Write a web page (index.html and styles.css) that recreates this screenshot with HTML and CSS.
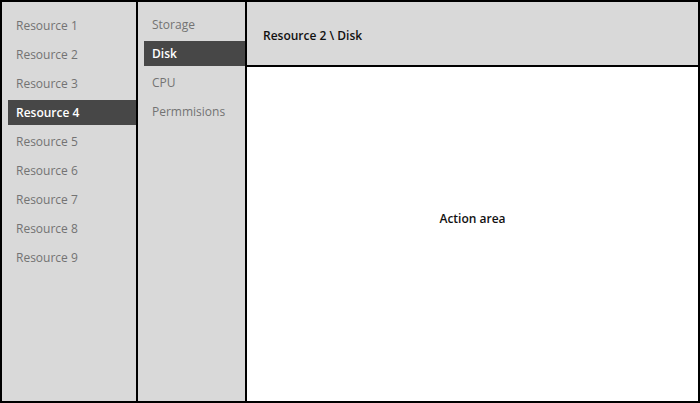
FILE: index.html
```html
<!DOCTYPE html>
<html>
<head>
<meta charset="utf-8">
<link rel="stylesheet" href="styles.css">
</head>
<body>
<div class="app">
  <nav class="col resources">
    <div class="item">Resource 1</div>
    <div class="item">Resource 2</div>
    <div class="item">Resource 3</div>
    <div class="item active">Resource 4</div>
    <div class="item">Resource 5</div>
    <div class="item">Resource 6</div>
    <div class="item">Resource 7</div>
    <div class="item">Resource 8</div>
    <div class="item">Resource 9</div>
  </nav>
  <nav class="col sections">
    <div class="item">Storage</div>
    <div class="item active">Disk</div>
    <div class="item">CPU</div>
    <div class="item">Permmisions</div>
  </nav>
  <main class="main">
    <header class="header">Resource 2 \ Disk</header>
    <section class="action">Action area</section>
  </main>
</div>
</body>
</html>
```
FILE: styles.css
```css
* { box-sizing: border-box; }
html, body { margin: 0; padding: 0; }
body {
  font-family: "Open Sans", "Noto Sans", sans-serif;
  font-size: 12px;
  background: #fff;
}
.app {
  width: 700px;
  height: 403px;
  border: 2px solid #000;
  display: flex;
}
.col {
  background: #d9d9d9;
  border-right: 2px solid #000;
  display: flex;
  flex-direction: column;
  gap: 4px;
  padding-left: 6px;
}
.resources { width: 136px; padding-top: 11px; }
.sections { width: 109px; padding-top: 10px; }
.item {
  height: 25px;
  line-height: 26px;
  padding-left: 8px;
  color: #737373;
  white-space: nowrap;
}
.item.active {
  background: #474747;
  color: #fff;
  font-weight: 600;
}
.main {
  flex: 1;
  display: flex;
  flex-direction: column;
}
.header {
  height: 65px;
  background: #d9d9d9;
  border-bottom: 2px solid #000;
  padding: 25px 0 0 16px;
  font-weight: 600;
  color: #111;
}
.action {
  flex: 1;
  text-align: center;
  padding-top: 143px;
  font-weight: 600;
  color: #111;
}
```
